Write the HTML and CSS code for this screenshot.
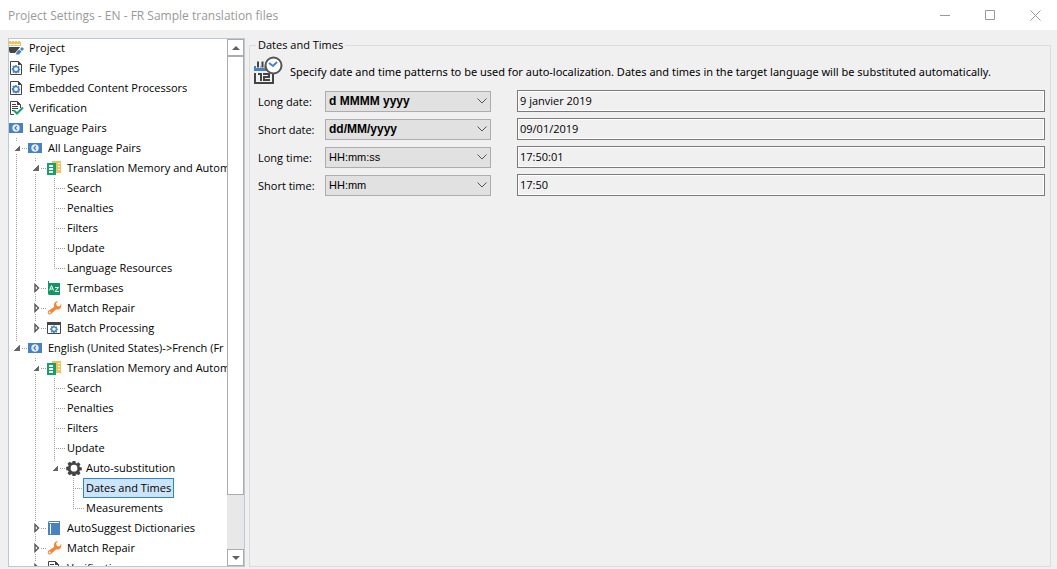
FILE: index.html
```
<!DOCTYPE html>
<html lang="en">
<head>
<meta charset="utf-8">
<title>Project Settings</title>
<link rel="stylesheet" href="styles.css">
</head>
<body>
  <!-- shared icons -->
  <svg class="sprite" aria-hidden="true">
    <symbol id="gear" viewBox="0 0 16 16">
      <path fill-rule="evenodd" d="M6.600 1h2.800l.4 2 1 .4 1.700-1.100 2 2-1.100 1.700.4 1 2 .4v2.800l-2 .4-.4 1 1.100 1.700-2 2-1.700-1.100-1 .4-.4 2H6.600l-.4-2-1-.4-1.700 1.100-2-2 1.100-1.700-.4-1-2-.4V6.800l2-.4.4-1L1.500 3.700l2-2 1.700 1.100 1-.4zM8 4.800a3.400 3.400 0 1 0 0 6.800 3.400 3.400 0 0 0 0-6.800z"/>
    </symbol>
    <symbol id="project" viewBox="0 0 16 16">
      <path fill="#edc25f" d="M0 1h2v1h1V1h2v1h1V1h2v1h1V1h2v1h1v4H0z"/>
      <path fill="#fff" d="M0 4h11v1H0z"/>
      <path fill="#444" d="M0 7h12l-6 6H1L0 11z"/>
      <path fill="#fff" d="M12 6l4 3-6 7H6l1-4z"/>
      <path fill="#4a82bd" d="M13 7l2 2-2 2-2-2zM10 9.500l2.500 2-2.500 3H7l.5-2.500z"/>
    </symbol>
    <symbol id="filetype" viewBox="0 0 16 16">
      <path fill="#fff" stroke="#444" d="M1.500 1.500h8l3 3v10h-11z"/>
      <path fill="#444" d="M9 1l4 4H9z"/>
      <use href="#gear" x="2.500" y="4.500" width="9" height="9" fill="#4a82bd"/>
    </symbol>
    <symbol id="verify" viewBox="0 0 16 16">
      <path fill="#fff" stroke="#444" d="M5 14.500H1.500v-13h7l3 3V8"/>
      <path fill="#444" d="M8 1l4 4H8zM3 4h4v1H3zM3 6h6v1H3zM3 8h6v1H3zM3 10h2v1H3z"/>
      <path fill="none" stroke="#16a06a" stroke-width="2" d="M5 10.500l3 3 6-6"/>
    </symbol>
    <symbol id="langpair" viewBox="0 0 16 16">
      <path fill="#4a82bd" d="M0 3h14v10H0z"/>
      <circle cx="7" cy="8" r="3.700" fill="#e4eef7"/>
      <path fill="none" stroke="#4a82bd" stroke-width="1.300" d="M7.800 5.800L6 8l1.800 2.200"/>
    </symbol>
    <symbol id="memory" viewBox="0 0 16 16">
      <path fill="#edc25f" d="M5 1h9v12H9V3H5z"/>
      <path fill="#fff" d="M11 3h2v1h-2zM11 6h2v1h-2zM11 9h2v1h-2z"/>
      <path fill="#16a06a" d="M0 3h9v12H0z"/>
      <path fill="#fff" d="M2 5h4v2H2zM2 8h4v2H2zM2 11h4v2H2z"/>
    </symbol>
    <symbol id="termbase" viewBox="0 0 16 16">
      <path fill="#129764" d="M1 1h1v1h11v13H2l-1-1z"/>
      <path fill="#fff" d="M2 2h11v1H2z"/>
      <path fill="none" stroke="#fff" d="M2.500 10.500l2-5 2 5M3.500 9h2M8 7.500h3.500L8 11.500h4"/>
    </symbol>
    <symbol id="wrench" viewBox="0 0 16 16">
      <path fill="#f0883a" d="M11 1L9 3.500l1 2.500 2.500.5L14 4c1 3-1 5.500-3 5.500H9L4 14c-2 1.500-4-.5-3-3l6-4V4c.5-2 2.500-3 4-3z"/>
      <circle cx="2.700" cy="12.500" r="1" fill="#fff"/>
    </symbol>
    <symbol id="batch" viewBox="0 0 16 16">
      <path fill="#fff" stroke="#444" d="M.5 2.500h13v11H.5z"/>
      <path fill="#444" d="M0 2h14v3H0z"/>
      <use href="#gear" x="3" y="5" width="8" height="8" fill="#4a82bd"/>
    </symbol>
    <symbol id="book" viewBox="0 0 16 16">
      <path fill="#4a82bd" d="M1 2l1-1h11v14H1z"/>
      <path fill="#fff" d="M3 4h1v10H3zM2 2h10v1H2z"/>
    </symbol>
  </svg>

  <header class="titlebar">
    <h1>Project Settings - EN - FR Sample translation files</h1>
    <div class="window-buttons">
      <button aria-label="Minimize"><svg width="11" height="11" viewBox="0 0 11 11"><path d="M0 5.500h10"/></svg></button>
      <button aria-label="Maximize"><svg width="11" height="11" viewBox="0 0 11 11"><path d="M.5.500h9v9h-9z"/></svg></button>
      <button aria-label="Close"><svg width="11" height="11" viewBox="0 0 11 11"><path d="M.5.500l10 10M10.500.500l-10 10"/></svg></button>
    </div>
  </header>

  <main>
    <nav class="tree">
      <ul class="root">
        <li><div class="row"><svg class="icon"><use href="#project"/></svg><span>Project</span></div></li>
        <li><div class="row"><svg class="icon"><use href="#filetype"/></svg><span>File Types</span></div></li>
        <li><div class="row"><svg class="icon"><use href="#filetype"/></svg><span>Embedded Content Processors</span></div></li>
        <li><div class="row"><svg class="icon"><use href="#verify"/></svg><span>Verification</span></div></li>
        <li><div class="row"><svg class="icon"><use href="#langpair"/></svg><span>Language Pairs</span></div>
          <ul class="branch first">
            <li><div class="row"><i class="node open"></i><svg class="icon"><use href="#langpair"/></svg><span>All Language Pairs</span></div>
              <ul class="branch">
                <li><div class="row"><i class="node open"></i><svg class="icon"><use href="#memory"/></svg><span>Translation Memory and Autom</span></div>
                  <ul class="branch">
                    <li><div class="row"><i class="node"></i><span>Search</span></div></li>
                    <li><div class="row"><i class="node"></i><span>Penalties</span></div></li>
                    <li><div class="row"><i class="node"></i><span>Filters</span></div></li>
                    <li><div class="row"><i class="node"></i><span>Update</span></div></li>
                    <li><div class="row"><i class="node"></i><span>Language Resources</span></div></li>
                  </ul>
                </li>
                <li><div class="row"><i class="node closed"></i><svg class="icon"><use href="#termbase"/></svg><span>Termbases</span></div></li>
                <li><div class="row"><i class="node closed"></i><svg class="icon"><use href="#wrench"/></svg><span>Match Repair</span></div></li>
                <li><div class="row"><i class="node closed"></i><svg class="icon"><use href="#batch"/></svg><span>Batch Processing</span></div></li>
              </ul>
            </li>
            <li><div class="row"><i class="node open"></i><svg class="icon"><use href="#langpair"/></svg><span>English (United States)-&gt;French (Fr</span></div>
              <ul class="branch">
                <li><div class="row"><i class="node open"></i><svg class="icon"><use href="#memory"/></svg><span>Translation Memory and Autom</span></div>
                  <ul class="branch">
                    <li><div class="row"><i class="node"></i><span>Search</span></div></li>
                    <li><div class="row"><i class="node"></i><span>Penalties</span></div></li>
                    <li><div class="row"><i class="node"></i><span>Filters</span></div></li>
                    <li><div class="row"><i class="node"></i><span>Update</span></div></li>
                    <li><div class="row"><i class="node open"></i><svg class="icon dark"><use href="#gear"/></svg><span>Auto-substitution</span></div>
                      <ul class="branch">
                        <li><div class="row"><i class="node"></i><span class="selected">Dates and Times</span></div></li>
                        <li><div class="row"><i class="node"></i><span>Measurements</span></div></li>
                      </ul>
                    </li>
                  </ul>
                </li>
                <li><div class="row"><i class="node closed"></i><svg class="icon"><use href="#book"/></svg><span>AutoSuggest Dictionaries</span></div></li>
                <li><div class="row"><i class="node closed"></i><svg class="icon"><use href="#wrench"/></svg><span>Match Repair</span></div></li>
                <li><div class="row"><i class="node closed"></i><svg class="icon"><use href="#verify"/></svg><span>Verification</span></div></li>
              </ul>
            </li>
          </ul>
        </li>
      </ul>
      <div class="scrollbar">
        <button aria-label="Scroll up"><svg width="8" height="4" viewBox="0 0 8 4"><path d="M0 4l4-4 4 4z"/></svg></button>
        <div class="track"><div class="thumb"></div></div>
        <button aria-label="Scroll down"><svg width="8" height="4" viewBox="0 0 8 4"><path d="M0 0h8L4 4z"/></svg></button>
      </div>
    </nav>

    <fieldset class="panel">
      <legend>Dates and Times</legend>
      <div class="intro">
        <svg width="30" height="30" viewBox="0 0 30 30" aria-hidden="true">
          <path fill="#4a82bd" d="M0 10h12l2 5H0z"/>
          <path fill="none" stroke="#f0f0f0" stroke-width="4" d="M4 5v7M8.500 5v7"/>
          <path fill="none" stroke="#444" stroke-width="2" d="M4 5.500v6M8.500 5.500v6M1 17v10h18V18"/>
          <path fill="none" stroke="#444" stroke-width="2" d="M4 18h3v7M9 18h6v3h-5v3h6"/>
          <circle cx="19.500" cy="9.500" r="8" fill="#fff" stroke="#555" stroke-width="2"/>
          <path fill="none" stroke="#4a82bd" stroke-width="2" d="M15 7l4 3 4-4"/>
        </svg>
        <p>Specify date and time patterns to be used for auto-localization. Dates and times in the target language will be substituted automatically.</p>
      </div>
      <div class="formats">
        <label for="long-date">Long date:</label>
        <select id="long-date" class="custom"><option>d MMMM yyyy</option></select>
        <input type="text" value="9 janvier 2019" aria-label="Long date preview" readonly>

        <label for="short-date">Short date:</label>
        <select id="short-date" class="custom"><option>dd/MM/yyyy</option></select>
        <input type="text" value="09/01/2019" aria-label="Short date preview" readonly>

        <label for="long-time">Long time:</label>
        <select id="long-time"><option>HH:mm:ss</option></select>
        <input type="text" value="17:50:01" aria-label="Long time preview" readonly>

        <label for="short-time">Short time:</label>
        <select id="short-time"><option>HH:mm</option></select>
        <input type="text" value="17:50" aria-label="Short time preview" readonly>
      </div>
    </fieldset>
  </main>
</body>
</html>
```

FILE: styles.css
```
* {
  box-sizing: border-box;
}

body {
  margin: 0;
  height: 100vh;
  display: flex;
  flex-direction: column;
  overflow: hidden;
  background-color: #f0f0f0;
  color: #000;
  font-family: "Open Sans", "Noto Sans", sans-serif;
  font-size: 11px;
}

.sprite {
  display: none;
}

/* title bar */
.titlebar {
  display: flex;
  justify-content: space-between;
  align-items: center;
  flex: none;
  height: 30px;
  padding-left: 8px;
  background-color: #fff;
}

.titlebar h1 {
  margin: 0;
  font-size: 12px;
  font-weight: normal;
  color: #999;
}

.window-buttons {
  display: flex;
}

.window-buttons button {
  display: flex;
  align-items: center;
  justify-content: center;
  width: 45px;
  height: 28px;
  padding: 0 0 0 2px;
  border: none;
  background: none;
}

.window-buttons path {
  fill: none;
  stroke: #999;
}

main {
  flex: 1;
  min-height: 0;
  display: flex;
  gap: 4px;
  padding: 8px 6px 2px 8px;
}

/* tree */
.tree {
  flex: none;
  display: flex;
  width: 237px;
  border: 1px solid #b8cbd3;
  background-color: #fff;
  overflow: hidden;
}

.tree ul {
  margin: 0;
  padding: 0;
  list-style: none;
}

.tree .root {
  flex: 1;
  min-width: 0;
  margin-top: -1px;
  overflow: hidden;
}

.tree .branch {
  padding-left: 19px;
}

.tree .branch.first {
  padding-left: 0;
}

.branch > li {
  background: repeating-linear-gradient(#a0a0a0 0 1px, transparent 1px 2px) 7px 0 / 1px 100% no-repeat;
}

.branch > li:last-child {
  background-size: 1px 10px;
}

.row {
  display: flex;
  align-items: center;
  height: 20px;
  white-space: nowrap;
}

.row span {
  line-height: 18px;
  padding-left: 1px;
}

.row .icon + span {
  padding-left: 4px;
}

.row .selected {
  margin-left: -2px;
  padding: 0 2px;
  border: 1px solid #2a86d0;
  background-color: #cce4f7;
}

.icon {
  flex: none;
  width: 16px;
  height: 16px;
}

.icon.dark {
  fill: #444;
}

.node {
  flex: none;
  display: flex;
  align-items: center;
  width: 19px;
  height: 20px;
  background: repeating-linear-gradient(90deg, #a0a0a0 0 1px, transparent 1px 2px) 7px 10px / 11px 1px no-repeat;
}

.node.open::before,
.node.closed::before {
  content: "";
  width: 12px;
  height: 12px;
  background-color: #fff;
}

.node.open::before {
  background-image: linear-gradient(135deg, transparent 50%, #666 50%);
  background-size: 6px 6px;
  background-position: 5px 3px;
  background-repeat: no-repeat;
}

.node.closed::before {
  background-image: url("data:image/svg+xml,%3Csvg xmlns='http://www.w3.org/2000/svg' width='6' height='10'%3E%3Cpath d='M1 1.500v7L4.500 5z' fill='white' stroke='%23555' stroke-width='1.400'/%3E%3C/svg%3E");
  background-position: 6px 1px;
  background-repeat: no-repeat;
}

/* scrollbar */
.scrollbar {
  flex: none;
  display: flex;
  flex-direction: column;
  width: 17px;
}

.scrollbar button {
  display: flex;
  align-items: center;
  justify-content: center;
  height: 17px;
  padding: 0;
  border: 1px solid #acacac;
  background-color: #fff;
}

.scrollbar path {
  fill: #606060;
}

.track {
  flex: 1;
  background-color: #e8e8e8;
}

.thumb {
  height: 89%;
  border: 1px solid #acacac;
  background-color: #fff;
}

/* settings panel */
.panel {
  flex: 1;
  min-width: 0;
  margin: 0;
  padding: 0 5px 0 4px;
  border: 1px solid #dcdcdc;
}

.panel legend {
  margin-left: 2px;
  padding: 0 2px;
  line-height: 14px;
}

.intro {
  display: flex;
  align-items: center;
  gap: 6px;
  margin-top: 4px;
}

.intro p {
  margin: 0;
  font-family: "Noto Sans", "Open Sans", sans-serif;
}

.formats {
  display: grid;
  grid-template-columns: 67px 166px 1fr;
  align-items: center;
  row-gap: 6px;
  margin-top: 4px;
  padding-left: 4px;
}

.formats select {
  height: 21px;
  padding: 0 3px;
  border: 1px solid #adadad;
  border-radius: 0;
  appearance: none;
  background: #e1e1e1 url("data:image/svg+xml,%3Csvg xmlns='http://www.w3.org/2000/svg' width='10' height='6'%3E%3Cpath d='M.5.500L5 5 9.500.500' fill='none' stroke='%23555'/%3E%3C/svg%3E") right 3px center no-repeat;
  color: #000;
  font-family: "Liberation Sans", Arial, sans-serif;
  font-size: 11px;
}

.formats select.custom {
  font-size: 12px;
  font-weight: bold;
}

.formats input {
  min-width: 0;
  height: 22px;
  margin-left: 26px;
  padding: 0 2px 2px;
  border: 1px solid #7a7a7a;
  outline: 1px solid #fff;
  outline-offset: -2px;
  background-color: #f0f0f0;
  color: #000;
  font: inherit;
}
```
